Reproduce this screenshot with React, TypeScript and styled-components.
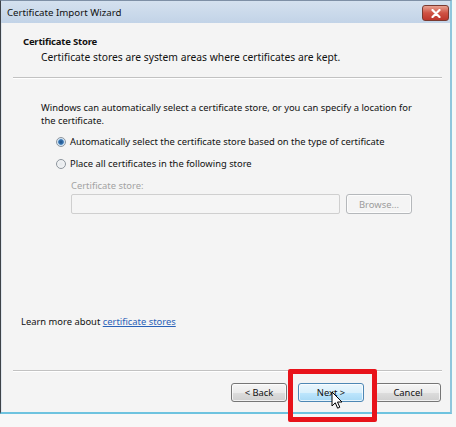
import React from "react";
import styled, { createGlobalStyle } from "styled-components";

const GlobalStyle = createGlobalStyle`
  html, body { margin: 0; padding: 0; background: #f7f7f7; }
  body { font-family: "Noto Sans", "Open Sans", sans-serif; font-size: 9.4px; color: #111; }
  * { box-sizing: border-box; }
`;

const Page = styled.div`
  width: 456px;
  height: 427px;
  position: relative;
  overflow: hidden;
`;

const Window = styled.div`
  width: 452px;
  height: 414px;
  display: flex;
  flex-direction: column;
  border-left: 1px solid #3d4248;
  border-right: 2px solid #8fc6dc;
  border-bottom: 2px solid #6ec3df;
  border-top: 1px solid #7e90a6;
  background: #c9d8ea;
`;

const TitleBar = styled.div`
  height: 22px;
  display: flex;
  align-items: center;
  justify-content: space-between;
  padding: 0 1px 0 6px;
  background: linear-gradient(#d4e1ef, #c2d3e7);
  font-size: 9.7px;
  color: #111;
`;

const CloseButton = styled.div`
  width: 27px;
  height: 16px;
  border-radius: 3px;
  border: 1px solid #7a3a30;
  background: linear-gradient(#e8a292, #cf5244 50%, #bd362c);
  display: flex;
  align-items: center;
  justify-content: center;
  margin-top: 2px;
`;

const Client = styled.div`
  flex: 1;
  display: flex;
  flex-direction: column;
  background: #f4f4f4;
  border-left: 1px solid #dfe6ee;
`;

const Header = styled.div`
  padding: 12px 0 0 21px;
  display: flex;
  flex-direction: column;
  gap: 3px;
`;

const HeaderTitle = styled.div`
  font-weight: 700;
  font-size: 9.5px;
  line-height: 13px;
  letter-spacing: -0.2px;
`;

const HeaderSub = styled.div`
  line-height: 13px;
  font-size: 10.3px;
  padding-left: 18px;
`;

const Separator = styled.div<{ $top: number }>`
  height: 1px;
  margin: ${(p) => p.$top}px 8px 0 11px;
  background: #c2c2c2;
  border-bottom: 1px solid #ffffff;
  box-sizing: content-box;
`;

const Body = styled.div`
  padding: 22px 0 0 39px;
  display: flex;
  flex-direction: column;
  flex: 1;
`;

const Para = styled.div`
  line-height: 13px;
`;

const RadioRow = styled.label<{ $top: number }>`
  display: flex;
  align-items: center;
  gap: 4px;
  margin: ${(p) => p.$top}px 0 0 15px;
  line-height: 13px;
`;

const Radio = styled.span<{ $checked?: boolean }>`
  width: 10px;
  height: 10px;
  border-radius: 50%;
  border: 1px solid #8d959d;
  background: ${(p) =>
    p.$checked
      ? "radial-gradient(circle, #1d4f86 0, #3b78b5 2.4px, #cfe3f4 3.2px, #eef3f8 100%)"
      : "radial-gradient(circle, #e6e9ec 0, #f6f7f8 100%)"};
`;

const FieldLabel = styled.div`
  margin: 9px 0 0 30px;
  line-height: 13px;
  color: #a3a3a3;
`;

const FieldRow = styled.div`
  display: flex;
  gap: 6px;
  margin: 2px 0 0 30px;
`;

const TextBox = styled.div`
  width: 269px;
  height: 20px;
  border: 1px solid #cfcfcf;
  border-radius: 2px;
  background: #f5f5f5;
`;

const Button = styled.div<{ $width: number; $hover?: boolean; $disabled?: boolean }>`
  width: ${(p) => p.$width}px;
  height: 19px;
  border-radius: 3px;
  display: flex;
  align-items: center;
  justify-content: center;
  border: 1px solid ${(p) => (p.$hover ? "#4d87b4" : p.$disabled ? "#b5b8bb" : "#767676")};
  background: ${(p) =>
    p.$hover
      ? "linear-gradient(#eaf6fd, #d9f0fc 50%, #bee6fd 51%, #a7d9f5)"
      : p.$disabled
      ? "#f4f4f4"
      : "linear-gradient(#f6f6f6, #ebebeb 50%, #dddddd 51%, #cfcfcf)"};
  color: ${(p) => (p.$disabled ? "#9c9c9c" : "#111")};
  box-shadow: inset 0 0 0 1px rgba(255, 255, 255, 0.7);
`;

const BrowseButton = styled(Button)`
  height: 20px;
`;

const Learn = styled.div`
  margin: auto 0 0 19px;
  line-height: 13px;
`;

const Link = styled.a`
  color: #2a62b8;
  text-decoration: underline;
`;

const Footer = styled.div`
  display: flex;
  justify-content: flex-end;
  gap: 11px;
  padding: 11px 9px 0 0;
  height: 40px;
`;

const BackNext = styled.div`
  display: flex;
  gap: 11px;
`;

const Highlight = styled.div`
  position: absolute;
  left: 288px;
  top: 369px;
  width: 89px;
  height: 53px;
  border: 5px solid #e8131a;
  border-radius: 2px;
`;

const Cursor = styled.svg`
  position: absolute;
  left: 331px;
  top: 391px;
`;

export default function App() {
  return (
    <Page>
      <GlobalStyle />
      <Window>
        <TitleBar>
          <span>Certificate Import Wizard</span>
          <CloseButton>
            <svg width="10" height="9" viewBox="0 0 10 9">
              <path d="M1.5 1 L8.5 8 M8.5 1 L1.5 8" stroke="#fff" strokeWidth="2.2" strokeLinecap="round" />
            </svg>
          </CloseButton>
        </TitleBar>
        <Client>
          <Header>
            <HeaderTitle>Certificate Store</HeaderTitle>
            <HeaderSub>Certificate stores are system areas where certificates are kept.</HeaderSub>
          </Header>
          <Separator $top={13} />
          <Body>
            <Para>
              Windows can automatically select a certificate store, or you can specify a location for
              <br />
              the certificate.
            </Para>
            <RadioRow $top={8}>
              <Radio $checked />
              Automatically select the certificate store based on the type of certificate
            </RadioRow>
            <RadioRow $top={9}>
              <Radio />
              Place all certificates in the following store
            </RadioRow>
            <FieldLabel>Certificate store:</FieldLabel>
            <FieldRow>
              <TextBox />
              <BrowseButton $width={66} $disabled>
                Browse...
              </BrowseButton>
            </FieldRow>
          </Body>
          <Learn>
            Learn more about <Link>certificate stores</Link>
          </Learn>
          <Separator $top={42} />
          <Footer>
            <BackNext>
              <Button $width={56}>&lt; Back</Button>
              <Button $width={66} $hover>
                Next &gt;
              </Button>
            </BackNext>
            <Button $width={66}>Cancel</Button>
          </Footer>
        </Client>
      </Window>
      <Highlight />
      <Cursor width="13" height="20" viewBox="0 0 13 20">
        <path
          d="M1 1 L1 15 L4.3 11.8 L6.6 17.2 L8.8 16.2 L6.5 11 L11 11 Z"
          fill="#fff"
          stroke="#000"
          strokeWidth="1"
          strokeLinejoin="miter"
        />
      </Cursor>
    </Page>
  );
}
